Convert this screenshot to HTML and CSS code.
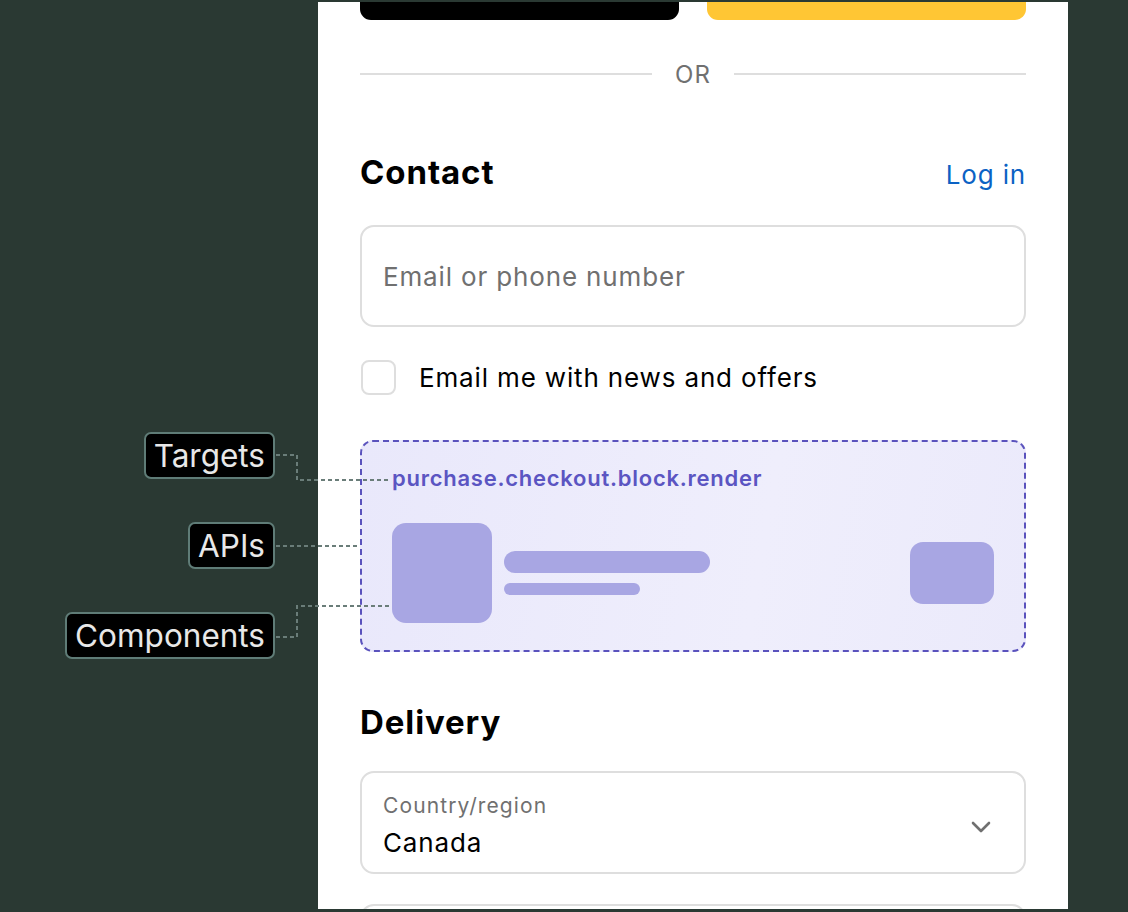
FILE: index.html
```html
<!DOCTYPE html>
<html lang="en">
<head>
  <meta charset="UTF-8">
  <meta name="viewport" content="width=device-width, initial-scale=1">
  <title>Checkout extension targets</title>
  <link rel="stylesheet" href="styles.css">
</head>
<body>
  <div class="stage">
    <!-- callouts on the left, pointing into the checkout -->
    <div class="callout callout-targets">Targets</div>
    <div class="callout callout-apis">APIs</div>
    <div class="callout callout-components">Components</div>
    <svg class="leaders" width="400" height="260" viewBox="0 420 400 260">
      <path d="M276 455 H297 V480 H390" />
      <path d="M276 546 H360" />
      <path d="M276 637 H297 V606 H392" />
    </svg>

    <div class="checkout">
      <div class="wallets">
        <div class="wallet wallet-dark"></div>
        <div class="wallet wallet-yellow"></div>
      </div>

      <div class="divider">
        <span class="divider-line"></span>
        <span class="divider-text">OR</span>
        <span class="divider-line"></span>
      </div>

      <div class="section-head">
        <h2>Contact</h2>
        <a class="link" href="#">Log in</a>
      </div>

      <div class="field">
        <span class="placeholder">Email or phone number</span>
      </div>

      <label class="check">
        <span class="box"></span>
        <span>Email me with news and offers</span>
      </label>

      <div class="extension">
        <div class="ext-target">purchase.checkout.block.render</div>
        <div class="ext-body">
          <div class="ext-thumb"></div>
          <div class="ext-lines">
            <div class="ext-line ext-line-long"></div>
            <div class="ext-line ext-line-short"></div>
          </div>
          <div class="ext-button"></div>
        </div>
      </div>

      <div class="section-head section-delivery">
        <h2>Delivery</h2>
      </div>

      <div class="field select">
        <div class="select-text">
          <span class="select-label">Country/region</span>
          <span class="select-value">Canada</span>
        </div>
        <svg class="chevron" width="20" height="12" viewBox="0 0 20 12">
          <path d="M2 2 L10 10 L18 2" />
        </svg>
      </div>

      <div class="field field-next"></div>
    </div>
  </div>
</body>
</html>
```

FILE: styles.css
```css
html, body {
  margin: 0;
  height: 100%;
}

body {
  background: #2a3933;
  font-family: Inter, "Noto Sans", sans-serif;
  overflow: hidden;
}

.stage {
  position: relative;
  height: 912px;
  padding-top: 2px;
  box-sizing: border-box;
}

/* checkout panel */
.checkout {
  margin-left: 318px;
  width: 750px;
  height: 907px;
  background: #fff;
  padding: 0 42px;
  box-sizing: border-box;
  overflow: hidden;
  letter-spacing: 0.85px;
}

.wallets {
  display: grid;
  grid-template-columns: 1fr 1fr;
  gap: 28px;
  height: 18px;
}
.wallet {
  border-radius: 0 0 11px 11px;
}
.wallet-dark {
  background: #000;
}
.wallet-yellow {
  background: #ffc634;
}

.divider {
  display: flex;
  align-items: center;
  margin-top: 42px;
  height: 24px;
}
.divider-line {
  flex: 1;
  height: 2px;
  background: #dedede;
}
.divider-text {
  padding: 0 23px;
  font-size: 24px;
  letter-spacing: 1px;
  color: #707070;
}

.section-head {
  display: flex;
  justify-content: space-between;
  align-items: baseline;
  margin-top: 66px;
}
.section-head h2 {
  margin: 0;
  font-size: 33px;
  line-height: 40px;
  font-weight: 700;
  color: #000;
  letter-spacing: 0.9px;
}
.link {
  font-size: 26px;
  color: #0b62c4;
  text-decoration: none;
}

.field {
  display: flex;
  align-items: center;
  height: 102px;
  margin-top: 33px;
  border: 2px solid #dedede;
  border-radius: 14px;
  padding: 0 21px;
  box-sizing: border-box;
}
.placeholder {
  font-size: 26px;
  color: #707070;
}

.check {
  display: flex;
  align-items: center;
  gap: 23px;
  margin-top: 33px;
  font-size: 26px;
  color: #000;
}
.check .box {
  width: 35px;
  height: 35px;
  border: 2px solid #dedede;
  border-radius: 8px;
  box-sizing: border-box;
  margin-left: 1px;
}

/* extension placeholder block */
.extension {
  margin-top: 45px;
  height: 212px;
  border: 2px dashed #5a52bd;
  border-radius: 13px;
  background: linear-gradient(100deg, #e9e8fb, #efeefc 60%, #ebeafb);
  padding: 23px 30px 0;
  box-sizing: border-box;
}
.ext-target {
  font-size: 22px;
  font-weight: 600;
  letter-spacing: 0.75px;
  color: #5b55c2;
  line-height: 26px;
}
.ext-body {
  display: flex;
  align-items: center;
  margin-top: 32px;
}
.ext-thumb {
  width: 100px;
  height: 100px;
  border-radius: 14px;
  background: #a8a6e3;
}
.ext-lines {
  flex: 1;
  display: flex;
  flex-direction: column;
  gap: 10px;
  margin-left: 12px;
}
.ext-line {
  background: #a8a6e3;
}
.ext-line-long {
  width: 206px;
  height: 22px;
  border-radius: 11px;
}
.ext-line-short {
  width: 136px;
  height: 12px;
  border-radius: 6px;
}
.ext-button {
  width: 84px;
  height: 62px;
  border-radius: 13px;
  background: #a8a6e3;
}

.section-delivery {
  margin-top: 50px;
}

.select {
  justify-content: space-between;
  align-items: flex-start;
  height: 103px;
  margin-top: 29px;
}
.select-text {
  display: flex;
  flex-direction: column;
  gap: 7px;
  margin-top: 20px;
}
.select-label {
  font-size: 21px;
  letter-spacing: 1.1px;
  color: #707070;
  line-height: 26px;
}
.select-value {
  font-size: 26px;
  color: #000;
  line-height: 34px;
}
.chevron {
  align-self: center;
  margin: 8px 12px 0 0;
}
.chevron path {
  fill: none;
  stroke: #707070;
  stroke-width: 2.6;
  stroke-linecap: round;
  stroke-linejoin: round;
}

.field-next {
  margin-top: 30px;
}

/* callouts */
.callout {
  position: absolute;
  right: 853px;
  height: 47px;
  padding: 0 8px;
  box-sizing: border-box;
  display: flex;
  align-items: center;
  background: #000;
  border: 2px solid #5f7c77;
  border-radius: 7px;
  color: #e8e8e8;
  font-size: 31.5px;
}
.callout-targets {
  top: 432px;
}
.callout-apis {
  top: 522px;
}
.callout-components {
  top: 612px;
}

.leaders {
  position: absolute;
  left: 0;
  top: 420px;
}
.leaders path {
  fill: none;
  stroke: #6a7d79;
  stroke-width: 2;
  stroke-dasharray: 4 3;
}
```
